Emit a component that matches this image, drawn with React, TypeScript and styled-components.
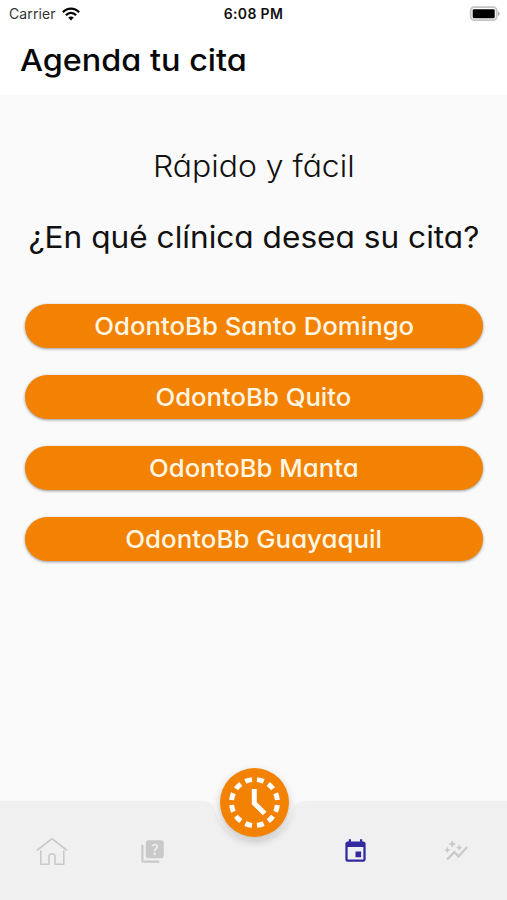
import React from "react";
import styled, { createGlobalStyle } from "styled-components";
import { MdAutoGraph, MdEvent, MdQuiz } from "react-icons/md";

const GlobalStyle = createGlobalStyle`
  * { box-sizing: border-box; }
  body {
    margin: 0;
    background: #fafafa;
    font-family: Inter, "Liberation Sans", sans-serif;
    font-feature-settings: "cv11" 1;
  }
`;

const Screen = styled.div`
  display: flex;
  flex-direction: column;
  height: 900px;
  width: 100%;
  overflow: hidden;
  background: #fafafa;
`;

const Header = styled.header`
  height: 95px;
  background: #fff;
`;

const StatusBar = styled.div`
  display: grid;
  grid-template-columns: 1fr auto 1fr;
  align-items: center;
  height: 27px;
  padding: 0 6px 0 9px;
  font-feature-settings: normal;
  color: #111;
`;

const Carrier = styled.div`
  display: flex;
  align-items: center;
  gap: 6px;
  font-size: 14px;
  letter-spacing: 0.1px;
  color: #333;
`;

const Time = styled.div`
  font-size: 14px;
  font-weight: 600;
  letter-spacing: 0.35px;
  margin-left: -3px;
`;

const BatterySlot = styled.div`
  display: flex;
  justify-content: flex-end;
`;

const Title = styled.h1`
  margin: 11px 0 0 20px;
  font-size: 30px;
  line-height: 44px;
  font-weight: 500;
  color: #080808;
  white-space: nowrap;
`;

const Wide = styled.span<{ $stretch: number; $origin?: string }>`
  display: inline-block;
  transform: scaleX(${(p) => p.$stretch});
  transform-origin: ${(p) => p.$origin ?? "center"};
`;

const Content = styled.main`
  flex: 1;
  padding-top: 49px;
`;

const Line = styled.p<{ $weight: number }>`
  margin: 0 0 27px;
  font-size: 30px;
  line-height: 44px;
  font-weight: ${(p) => p.$weight};
  text-align: center;
  white-space: nowrap;
  color: #111;
`;

const ClinicList = styled.div`
  display: flex;
  flex-direction: column;
  gap: 27px;
  padding: 18px 24.5px 0 25px;
`;

const ClinicButton = styled.button`
  height: 44px;
  padding: 0;
  border: 0;
  border-radius: 22px;
  background: #f38202;
  box-shadow: 0 1px 3px rgba(0, 0, 0, 0.4);
  color: #fff6e4;
  font-family: inherit;
  font-feature-settings: inherit;
  font-size: 24.5px;
  font-weight: 500;
  line-height: 44px;
`;

const BottomBar = styled.nav`
  position: relative;
  height: 100px;
`;

const BarShape = styled.svg`
  position: absolute;
  inset: 0;
  width: 100%;
  height: 100%;
`;

const Tabs = styled.div`
  position: relative;
  display: grid;
  grid-template-columns: repeat(5, 1fr);
  height: 100%;
  padding: 2px 0 0 1px;
`;

const Tab = styled.div<{ $active?: boolean }>`
  display: flex;
  align-items: center;
  justify-content: center;
  color: ${(p) => (p.$active ? "#3029a0" : "#c9c9c9")};
`;

const ClockButton = styled.div`
  position: absolute;
  top: -32px;
  left: calc(50% - 34px);
  width: 69px;
  height: 69px;
  border-radius: 50%;
  background: #f38202;
  box-shadow: 0 4px 9px rgba(0, 0, 0, 0.22);
`;

const clinics = [
  { name: "OdontoBb Santo Domingo", stretch: 1.051 },
  { name: "OdontoBb Quito", stretch: 1.049 },
  { name: "OdontoBb Manta", stretch: 1.05 },
  { name: "OdontoBb Guayaquil", stretch: 1.055 },
];

const Wifi = () => (
  <svg width="18" height="14" viewBox="0 0 18 14" fill="none" stroke="#000" strokeWidth="2.3">
    <path d="M0.9 5.2 C5.5 0.3 12.5 0.3 17.1 5.2" />
    <path d="M3.9 8.3 C6.8 5.1 11.2 5.1 14.1 8.3" />
    <path d="M6.2 10.6 C7.8 9 10.2 9 11.8 10.6 L9 13.6 Z" fill="#000" stroke="none" />
  </svg>
);

const Battery = () => (
  <svg width="32" height="16" viewBox="0 0 32 16">
    <rect x="1.7" y="1.2" width="26" height="13" rx="3.6" fill="#fff" stroke="#c4c4c4" strokeWidth="1.8" />
    <rect x="3.7" y="3.2" width="22" height="9" rx="1.2" fill="#000" />
    <path d="M29 5.2 Q32.4 7.7 29 10.2 Z" fill="#aaa" />
  </svg>
);

const House = () => (
  <svg width="32" height="29" viewBox="0 0 32 29" fill="none" stroke="currentColor" strokeWidth="1.6" strokeLinecap="round" strokeLinejoin="round">
    <path d="M1.5 13 L16 1.7 L30.5 13" />
    <path d="M4.8 14 V27.2 H13 V19.5 Q13 16.7 16 16.7 Q19 16.7 19 19.5 V27.2 H27.8 V14" />
  </svg>
);

const Clock = () => (
  <svg width="69" height="69" viewBox="0 0 69 69" fill="none" stroke="#fff">
    <circle
      cx="34.5" cy="34.5" r="23" strokeWidth="5" pathLength="360"
      strokeDasharray="17 13" strokeDashoffset="-6.5"
    />
    <path d="M34.3 21 V35.2 L44.7 45.5" strokeWidth="5" />
  </svg>
);

export default function App() {
  return (
    <Screen>
      <GlobalStyle />
      <Header>
        <StatusBar>
          <Carrier>Carrier <Wifi /></Carrier>
          <Time>6:08 PM</Time>
          <BatterySlot><Battery /></BatterySlot>
        </StatusBar>
        <Title><Wide $stretch={1.08} $origin="left">Agenda tu cita</Wide></Title>
      </Header>
      <Content>
        <Line $weight={300}><Wide $stretch={1.063}>Rápido y fácil</Wide></Line>
        <Line $weight={400}><Wide $stretch={1.054}>¿En qué clínica desea su cita?</Wide></Line>
        <ClinicList>
          {clinics.map((c) => (
            <ClinicButton key={c.name}>
              <Wide $stretch={c.stretch}>{c.name}</Wide>
            </ClinicButton>
          ))}
        </ClinicList>
      </Content>
      <BottomBar>
        <BarShape viewBox="0 0 507 100" preserveAspectRatio="none">
          <path
            d="M0 1 H200 C211 1 213 4 215 10 C220 28 235 40 254 40 C273 40 288 28 293 10 C295 4 297 1 308 1 H507 V100 H0 Z"
            fill="#f0f0f0"
          />
        </BarShape>
        <Tabs>
          <Tab><House /></Tab>
          <Tab><MdQuiz size={27} /></Tab>
          <Tab />
          <Tab $active><MdEvent size={27} /></Tab>
          <Tab><MdAutoGraph size={26} /></Tab>
        </Tabs>
        <ClockButton><Clock /></ClockButton>
      </BottomBar>
    </Screen>
  );
}
